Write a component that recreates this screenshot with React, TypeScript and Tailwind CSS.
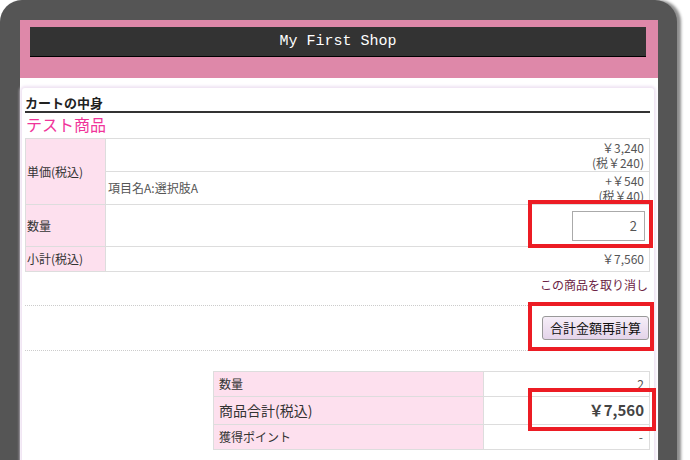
import React from "react";

const jp = { fontFamily: '"Noto Sans CJK JP", "Noto Sans", sans-serif' };

function RedBox({ className }: { className: string }) {
  return <div className={`absolute border-[4px] border-[#ec1c24] pointer-events-none ${className}`} />;
}

export default function App() {
  return (
    <div className="relative w-[690px] h-[460px] overflow-hidden bg-white text-[#333]" style={jp}>
      <div className="w-[677px] h-[480px] bg-[#555555] rounded-t-[22px] pt-[20px] pl-[20px] pr-[19px] shadow-[4px_0_3px_rgba(0,0,0,0.45)]">
        {/* header */}
        <div className="h-[58px] bg-[#de88a9] pt-[7px] pl-[10px] pr-[12px]">
          <div className="h-[30px] bg-[#333333] border-b border-black flex items-center justify-center">
            <span className="text-white text-[15px] leading-none" style={{ fontFamily: '"Liberation Mono", monospace' }}>
              My First Shop
            </span>
          </div>
        </div>

        {/* body */}
        <div className="h-[400px] bg-white pt-[10px] pl-[2px] pr-[4px]">
          <div className="h-[390px] bg-white rounded-[3px] shadow-[0_0_3px_2px_#efe3f3] pl-[3px] pr-[4px] pt-[6px]">
            <div className="text-[13px] font-bold leading-[17px] border-b-2 border-[#333] text-[#222]">カートの中身</div>
            <div className="text-[16px] leading-[20px] text-[#f0349a] mt-[1px] pl-[1px]">テスト商品</div>

            <table className="w-[625px] border-collapse text-[12px] leading-[14px] mt-[4px]">
              <tbody>
                <tr className="h-[33px]">
                  <td rowSpan={2} className="w-[80px] bg-[#fde0ee] border border-[#dddddd] pl-[1px] align-middle">単価(税込)</td>
                  <td className="border border-[#dddddd] text-right pr-[5px] text-[#555] leading-[15px]">
                    ￥3,240<br />(税￥240)
                  </td>
                </tr>
                <tr className="h-[33px]">
                  <td className="border border-[#dddddd] pl-[2px] pr-[5px] text-[#555]">
                    <div className="flex items-center justify-between">
                      <span>項目名A:選択肢A</span>
                      <span className="text-right leading-[15px]">+￥540<br />(税￥40)</span>
                    </div>
                  </td>
                </tr>
                <tr className="h-[42px]">
                  <td className="bg-[#fde0ee] border border-[#dddddd] pl-[1px]">数量</td>
                  <td className="border border-[#dddddd] pr-[4px]">
                    <div className="flex justify-end">
                      <div className="w-[73px] h-[30px] border border-[#aaaaaa] flex items-center justify-end pr-[7px] text-[13px] text-[#555]">2</div>
                    </div>
                  </td>
                </tr>
                <tr className="h-[25px]">
                  <td className="bg-[#fde0ee] border border-[#dddddd] pl-[1px]">小計(税込)</td>
                  <td className="border border-[#dddddd] text-right pr-[5px] text-[#555]">￥7,560</td>
                </tr>
              </tbody>
            </table>

            <div className="text-right text-[12px] leading-[14px] text-[#6b2344] pr-[2px] mt-[6px]">この商品を取り消し</div>

            <div className="mt-[13px] border-t border-dotted border-[#cccccc] h-[45px] flex items-center justify-end pr-[1px]">
              <button className="h-[24px] px-[7px] text-[13px] text-[#111] border border-[#999] rounded-[3px] bg-gradient-to-b from-[#f6eef8] to-[#e4d4ea]" style={jp}>
                合計金額再計算
              </button>
            </div>
            <div className="border-t border-dotted border-[#cccccc]" />

            <div className="flex justify-end mt-[20px]">
              <table className="w-[437px] border-collapse text-[12px]">
                <tbody>
                  <tr className="h-[25px]">
                    <td className="w-[270px] bg-[#fde0ee] border border-[#dddddd] pl-[5px]">数量</td>
                    <td className="border border-[#dddddd] text-right pr-[5px] text-[#555]">2</td>
                  </tr>
                  <tr className="h-[28px]">
                    <td className="bg-[#fde0ee] border border-[#dddddd] pl-[5px] text-[14px]">商品合計(税込)</td>
                    <td className="border border-[#dddddd] text-right pr-[5px] text-[15px] font-bold text-[#444]">￥7,560</td>
                  </tr>
                  <tr className="h-[25px]">
                    <td className="bg-[#fde0ee] border border-[#dddddd] pl-[5px]">獲得ポイント</td>
                    <td className="border border-[#dddddd] text-right pr-[6px] text-[#555]">-</td>
                  </tr>
                </tbody>
              </table>
            </div>
          </div>
        </div>
      </div>

      <RedBox className="left-[528px] top-[200px] w-[125px] h-[48px]" />
      <RedBox className="left-[528px] top-[302px] w-[126px] h-[49px]" />
      <RedBox className="left-[528px] top-[388px] w-[128px] h-[43px]" />
    </div>
  );
}
